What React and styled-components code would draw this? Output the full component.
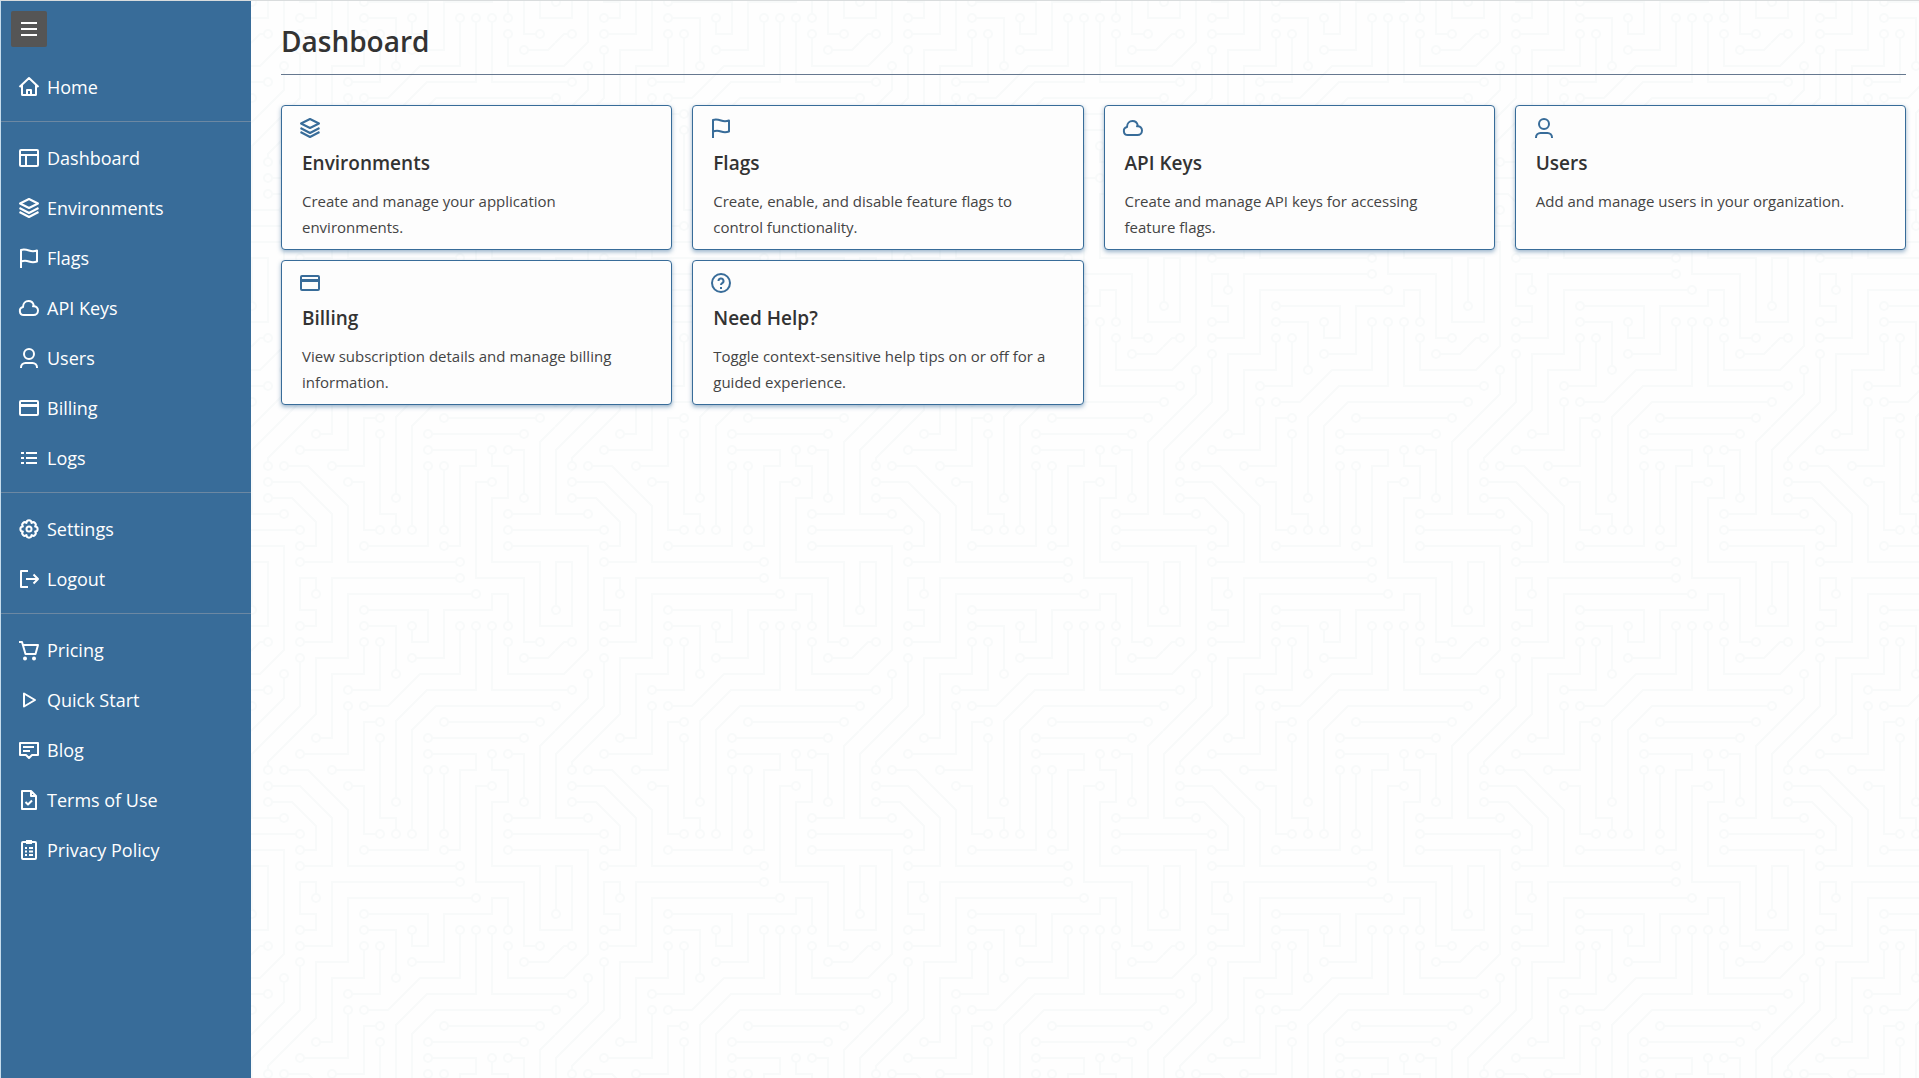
// src/App.jsx
import React from 'react';
import styled, { createGlobalStyle } from 'styled-components';

/* Circuit board tile, 304 x 304, repeated behind the content */
const traces = [
  'M0 225H45', 'M81 304V273H205', 'M261 225H304', 'M261 241H304', 'M181 129H269', 'M0 81H13',
  'M197 113H285', 'M257 0V13', 'M193 165V221', 'M241 21V81H304', 'M257 37V65H304',
  'M129 133V209H145V221', 'M125 113H113V161H85', 'M117 241H177V165', 'M101 177H113V225H125',
  'M65 285V273H49V304', 'M237 177H225V273H273V304', 'M261 145H273V189',
  'M197 241H209V161H225V145H181', 'M285 33H273V0', 'M97 101V145H53', 'M53 33H81V0',
  'M113 37V65H81V129H69', 'M101 81H129V37', 'M117 17H145V61', 'M221 289H97V304',
  'M241 149V161H257V193H241V257H289V304', 'M53 17H65V1H48', 'M165 49H193V1H242',
  'M117 1H177V33H161V21', 'M117 97H137L169 65H209V21', 'M145 189V112L176 81H225V21',
  'M161 221V121L185 97H301', 'M17 157V153L65 105V49H97V0', 'M49 53V97L1 145V209H29',
  'M33 69V89L0 122', 'M13 33H9L0 42', 'M277 49H297L304 42', 'M261 209H289V137L304 122',
  'M53 241H65V217L41 193H21', 'M205 257H97V201L57 161H37', 'M53 257H81V209L49 177H21',
  'M33 0V41L9 65H0', 'M1 301V257H17V304', 'M33 304V241H0', 'M0 17H17V0', 'M304 17H289V0',
  'M257 304V289H241V304',
];

const pads = [
  [49, 225], [209, 273], [257, 225], [257, 241], [273, 129], [177, 129], [17, 81], [193, 113],
  [289, 113], [257, 17], [193, 225], [193, 161], [241, 17], [257, 33], [129, 129], [145, 225],
  [129, 113], [81, 161], [113, 241], [177, 161], [97, 177], [129, 225], [65, 289], [241, 177],
  [257, 145], [273, 193], [193, 241], [177, 145], [289, 33], [97, 97], [49, 145], [49, 33],
  [113, 33], [65, 129], [97, 81], [129, 33], [113, 17], [145, 65], [225, 289], [241, 145],
  [49, 17], [161, 49], [113, 1], [113, 305], [161, 17], [113, 97], [209, 17], [145, 193],
  [225, 17], [161, 225], [1, 97], [305, 97], [17, 161], [49, 49], [33, 209], [33, 65], [17, 33],
  [273, 49], [257, 209], [49, 241], [17, 193], [209, 257], [33, 161], [49, 257], [17, 177],
  [1, 1], [305, 1], [1, 305], [305, 305],
];

const circles = pads.map(([x, y]) => `<circle cx="${x}" cy="${y}" r="4"/>`).join('');
const tile = `<svg xmlns="http://www.w3.org/2000/svg" width="304" height="304"><g fill="none" stroke="#f8fafa" stroke-width="2"><path d="${traces.join('')}"/>${circles}</g></svg>`;
const circuitBoard = `url("data:image/svg+xml,${encodeURIComponent(tile)}")`;

/* Icons */
const icons = {
  menu: <path d="M4 6h16M4 12h16M4 18h16" />,
  home: <path d="M2.5 12L12 3l9.5 9M5 10v9.5a.5.5 0 0 0 .5.5h13a.5.5 0 0 0 .5-.5V10M10 20v-5h4v5" />,
  dashboard: (
    <>
      <rect x="3" y="4" width="18" height="16" rx="1" />
      <path d="M3 9h18M9 9v11" />
    </>
  ),
  layers: <path d="M12 3l9 4.500-9 4.500-9-4.500zM2.500 12l9.500 5 9.500-5M2.500 16l9.500 5 9.500-5" />,
  flag: <path d="M4 22V4c3-1 5-.5 8 .5s5 1 8 0v11c-3 1-5 1-8 0s-5-1-8 0" />,
  cloud: <path d="M7 19a4 4 0 0 1-1-7.900C6 7.500 8.500 5 11.500 5c2.700 0 4.700 1.800 5.300 4.500l-.8.800c3-.6 5 1.500 5 4.200A4.500 4.500 0 0 1 16.500 19z" />,
  user: (
    <>
      <circle cx="12" cy="8" r="5" />
      <path d="M4 22v-.5A4.500 4.500 0 0 1 8.500 17h7a4.500 4.500 0 0 1 4.500 4.500v.5" />
    </>
  ),
  card: (
    <>
      <rect x="3" y="5" width="18" height="14" rx="1" />
      <path d="M3 9.500h18" strokeWidth="3" />
    </>
  ),
  list: <path d="M4 7h3M4 12h3M4 17h3M9 7h11M9 12h11M9 17h11" />,
  gear: (
    <>
      <path d="M18.100 14.530a2.530 2.530 0 0 1-3.570 3.570a2.530 2.530 0 0 1-5.060 0a2.530 2.530 0 0 1-3.570-3.570a2.530 2.530 0 0 1 0-5.060a2.530 2.530 0 0 1 3.570-3.570a2.530 2.530 0 0 1 5.060 0a2.530 2.530 0 0 1 3.570 3.570a2.530 2.530 0 0 1 0 5.060z" />
      <circle cx="12" cy="12" r="2.500" />
    </>
  ),
  logout: <path d="M11 4H4v16h7M9 12h12M16.500 7.500L21 12l-4.500 4.500" />,
  cart: (
    <>
      <path d="M2 4h3l3.500 12h10L21 7H6" />
      <circle cx="8" cy="20.500" r="1" />
      <circle cx="17" cy="20.500" r="1" />
    </>
  ),
  play: <path d="M7 5.500v13L18 12z" />,
  message: (
    <>
      <path d="M3 5h18v12h-6l-3 3-3-3H3z" />
      <path d="M6 9h11M6 13h7" />
    </>
  ),
  fileCheck: <path d="M5 3h9l5 5v13H5zM14 3v5h5M8.500 14l2.500 2.500 4-4" />,
  clipboard: (
    <>
      <rect x="5" y="4" width="14" height="17" rx="1" />
      <path d="M9 4h6" strokeWidth="4" />
      <path d="M8 10h2M12 10h4M8 13.500h2M12 13.500h4M8 17h2M12 17h4" />
    </>
  ),
  help: (
    <>
      <circle cx="12" cy="12" r="9" />
      <path d="M9.500 10a2.500 2.500 0 1 1 3.700 2.100c-.8.500-1.200.9-1.200 1.900M12 16v2" />
    </>
  ),
};

const GlobalStyle = createGlobalStyle`
  * {
    box-sizing: border-box;
  }

  body {
    margin: 0;
    font-family: 'Open Sans', 'Noto Sans', sans-serif;
    color: #333;
    background: #fff;
  }
`;

/* Styled Components */
const Page = styled.div`
  display: flex;
  min-height: 100vh;
  border-top: 1px solid #d9dcdd;
  border-left: 1px solid #c5dcec;
`;

const Sidebar = styled.aside`
  flex: 0 0 250px;
  padding: 10px 0;
  background: #386c99;
`;

const MenuButton = styled.button`
  display: flex;
  align-items: center;
  justify-content: center;
  width: 36px;
  height: 36px;
  margin: 0 10px 15px;
  padding: 0;
  border: none;
  border-radius: 2px;
  background: #555;
  color: #fff;
  cursor: pointer;
`;

const NavGroup = styled.ul`
  margin: 0;
  padding: 0;
  list-style: none;

  & + & {
    margin-top: 9px;
    padding-top: 11px;
    border-top: 1px solid #6c88a3;
  }
`;

const NavLink = styled.a`
  display: flex;
  align-items: center;
  gap: 6px;
  height: 50px;
  padding: 0 16px;
  color: #fff;
  font-size: 18px;
  text-decoration: none;

  &:hover {
    background: #2f5d85;
  }
`;

const IconSvg = styled.svg`
  flex: none;
  width: 24px;
  height: 24px;
  fill: none;
  stroke: currentColor;
  stroke-width: 2;
  stroke-linejoin: round;
`;

const Content = styled.main`
  flex: 1;
  min-width: 0;
  padding: 0 13px 30px 30px;
  background: #fefefe ${circuitBoard};
`;

const Title = styled.h1`
  margin: 0 0 30px;
  padding: 20px 0 13px;
  border-bottom: 1px solid #66788f;
  font-size: 28px;
  font-weight: 600;
  line-height: 40px;
`;

const CardGrid = styled.div`
  display: grid;
  grid-template-columns: repeat(4, 1fr);
  gap: 10px 20px;

  @media (max-width: 1200px) {
    grid-template-columns: repeat(2, 1fr);
  }
`;

const Card = styled.a`
  display: block;
  padding: 10px 16px 9px;
  border: 1px solid #386c99;
  border-radius: 4px;
  background: #fdfdfd;
  box-shadow: 0 2px 4px rgba(56, 108, 153, 0.5);
  color: #386c99;
  text-decoration: none;

  ${IconSvg} {
    display: block;
  }
`;

const CardTitle = styled.h2`
  margin: 8px 4px 10px;
  color: #333;
  font-size: 19px;
  font-weight: 600;
  line-height: 30px;
`;

const CardText = styled.p`
  margin: 0 8px 0 4px;
  color: #444;
  font-size: 15px;
  line-height: 26px;
`;

const navGroups = [
  [{ icon: 'home', label: 'Home' }],
  [
    { icon: 'dashboard', label: 'Dashboard' },
    { icon: 'layers', label: 'Environments' },
    { icon: 'flag', label: 'Flags' },
    { icon: 'cloud', label: 'API Keys' },
    { icon: 'user', label: 'Users' },
    { icon: 'card', label: 'Billing' },
    { icon: 'list', label: 'Logs' },
  ],
  [
    { icon: 'gear', label: 'Settings' },
    { icon: 'logout', label: 'Logout' },
  ],
  [
    { icon: 'cart', label: 'Pricing' },
    { icon: 'play', label: 'Quick Start' },
    { icon: 'message', label: 'Blog' },
    { icon: 'fileCheck', label: 'Terms of Use' },
    { icon: 'clipboard', label: 'Privacy Policy' },
  ],
];

const cards = [
  { icon: 'layers', title: 'Environments', text: 'Create and manage your application environments.' },
  { icon: 'flag', title: 'Flags', text: 'Create, enable, and disable feature flags to control functionality.' },
  { icon: 'cloud', title: 'API Keys', text: 'Create and manage API keys for accessing feature flags.' },
  { icon: 'user', title: 'Users', text: 'Add and manage users in your organization.' },
  { icon: 'card', title: 'Billing', text: 'View subscription details and manage billing information.' },
  { icon: 'help', title: 'Need Help?', text: 'Toggle context-sensitive help tips on or off for a guided experience.' },
];

const toHref = (label) => `#${label.toLowerCase().replace(/[^a-z]+/g, '-')}`;

const Icon = ({ name }) => (
  <IconSvg viewBox="0 0 24 24" aria-hidden="true">
    {icons[name]}
  </IconSvg>
);

const App = () => {
  return (
    <>
      <GlobalStyle />
      <Page>
        <Sidebar>
          <MenuButton type="button" aria-label="Toggle menu">
            <Icon name="menu" />
          </MenuButton>
          <nav>
            {navGroups.map((group) => (
              <NavGroup key={group[0].label}>
                {group.map((item) => (
                  <li key={item.label}>
                    <NavLink href={toHref(item.label)}>
                      <Icon name={item.icon} />
                      {item.label}
                    </NavLink>
                  </li>
                ))}
              </NavGroup>
            ))}
          </nav>
        </Sidebar>
        <Content>
          <Title>Dashboard</Title>
          <CardGrid>
            {cards.map((card) => (
              <Card key={card.title} href={toHref(card.title)}>
                <Icon name={card.icon} />
                <CardTitle>{card.title}</CardTitle>
                <CardText>{card.text}</CardText>
              </Card>
            ))}
          </CardGrid>
        </Content>
      </Page>
    </>
  );
};

export default App;
